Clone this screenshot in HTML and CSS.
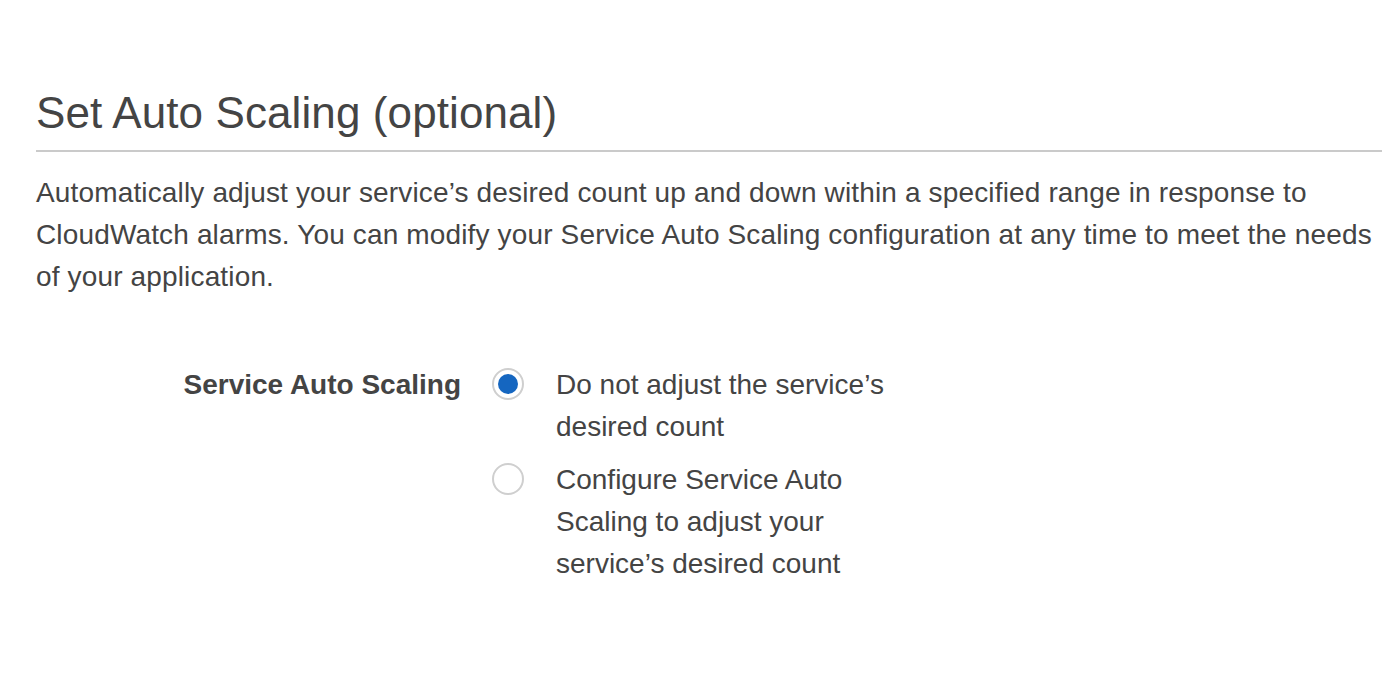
FILE: index.html
```html
<!DOCTYPE html>
<html>
<head>
<meta charset="utf-8">
<link rel="stylesheet" href="styles.css">
</head>
<body>
<div class="page">
  <h1 class="title">Set Auto Scaling (optional)</h1>
  <p class="desc">Automatically adjust your service’s desired count up and down within a specified range in response to CloudWatch alarms. You can modify your Service Auto Scaling configuration at any time to meet the needs of your application.</p>
  <div class="field">
    <div class="label">Service Auto Scaling</div>
    <div class="options">
      <label class="option">
        <span class="radio checked"></span>
        <span class="opt-text">Do not adjust the service’s desired count</span>
      </label>
      <label class="option">
        <span class="radio"></span>
        <span class="opt-text">Configure Service Auto Scaling to adjust your service’s desired count</span>
      </label>
    </div>
  </div>
</div>
</body>
</html>
```
FILE: styles.css
```css
html, body {
  margin: 0;
  padding: 0;
  background: #fff;
}
body {
  font-family: "Liberation Sans", Arial, sans-serif;
  color: #444;
}
.page {
  padding: 85px 8px 0 36px;
}
.title {
  margin: 0;
  font-size: 44px;
  font-weight: normal;
  line-height: 56px;
  letter-spacing: 0.1px;
  color: #444;
  padding-bottom: 9px;
  border-bottom: 2px solid #cacaca;
}
.desc {
  margin: 20px 0 0 0;
  font-size: 28px;
  line-height: 42px;
  letter-spacing: 0.15px;
}
.field {
  display: flex;
  margin-top: 66px;
}
.label {
  width: 425px;
  flex: none;
  text-align: right;
  font-weight: bold;
  font-size: 28px;
  line-height: 42px;
}
.options {
  display: flex;
  flex-direction: column;
  gap: 11px;
}
.option {
  display: flex;
  align-items: flex-start;
}
.radio {
  flex: none;
  width: 32px;
  height: 32px;
  box-sizing: border-box;
  border: 2px solid #cfcfcf;
  border-radius: 50%;
  margin: 4px 32px 0 31px;
  display: flex;
  align-items: center;
  justify-content: center;
}
.radio.checked::after {
  content: "";
  width: 20px;
  height: 20px;
  border-radius: 50%;
  background: #1566c0;
}
.opt-text {
  width: 350px;
  font-size: 28px;
  line-height: 42px;
}
```
